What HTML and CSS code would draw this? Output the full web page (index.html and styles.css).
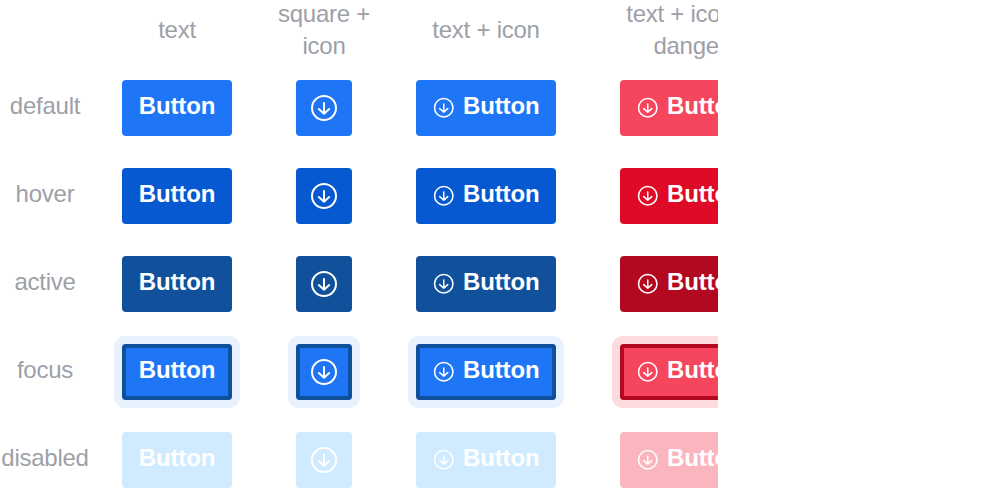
FILE: index.html
```
<!DOCTYPE html>
<html lang="en"><head><meta charset="utf-8"><title>Button states</title><link rel="stylesheet" href="styles.css"></head>
<body>
<svg width="0" height="0" class="defs"><symbol id="down" viewBox="0 0 28 28"><circle cx="14" cy="14" r="12"/><path d="M14 9v10.8M8.8 15.1l5.2 4.7 5.2-4.7"/></symbol></svg>
<main class="sheet" id="sheet">
<div class="head"></div><div class="head">text</div><div class="head">square +<br>icon</div><div class="head">text + icon</div><div class="head">text + icon +<br>danger</div>
</main>
<script src="script.js"></script>
</body></html>
```
FILE: styles.css
```
body { margin: 0; background: #fff; font-family: "Liberation Sans", Arial, sans-serif; }
.defs { display: block; }
.sheet { display: grid; grid-template-columns: 90px 174px 120px 204px 168px; grid-template-rows: 64px repeat(5, 88px); width: 718px; height: 504px; overflow: hidden; font-size: 24px; line-height: 32px; color: #9d9fa9; }
.head { display: flex; box-sizing: border-box; height: 60px; align-items: center; justify-content: center; text-align: center; white-space: nowrap; letter-spacing: -0.25px; }
.head:nth-child(2) { width: 110px; margin-left: 32px; }
.head:nth-child(3) { width: 120px; }
.head:nth-child(4) { width: 140px; margin-left: 32px; }
.head:nth-child(5) { width: 140px; margin-left: 32px; }
.label { padding-top: 26px; text-align: center; letter-spacing: -0.25px; }
.cell { padding: 16px 0 0 32px; }
.btn { display: flex; box-sizing: border-box; align-items: center; justify-content: center; width: 140px; height: 56px; padding: 0 0 4px; border: 0; border-radius: 4px; color: #fff; background: #1e75f6; font: bold 24px/32px "Liberation Sans", Arial, sans-serif; letter-spacing: -0.15px; }
.btn svg { flex: none; fill: none; stroke: #fff; stroke-width: 2; stroke-linecap: round; stroke-linejoin: round; width: 28px; height: 28px; }
.text { width: 110px; }
.square { width: 56px; padding: 0; }
.both { justify-content: flex-start; padding-left: 17px; }
.both svg { width: 21.5px; height: 21.5px; margin: 4px 8.5px 0 0; }
.hover { background: #0759d2; }
.active { background: #11519b; }
.focus { background: #1e75f6; box-shadow: inset 0 0 0 4px #11519b, 0 0 0 8px #e8f1fe; }
.disabled { background: #d0eaff; }
.danger { background: #f6465d; }
.danger.hover { background: #de0a26; }
.danger.active { background: #b30920; }
.danger.focus { background: #f6465d; box-shadow: inset 0 0 0 4px #b30920, 0 0 0 8px #fddade; }
.danger.disabled { background: #fbb5be; }
```
FILE: script.js
```
const icon = '<svg aria-hidden="true"><use href="#down"/></svg>';
document.querySelector('#sheet').insertAdjacentHTML('beforeend', ['default', 'hover', 'active', 'focus', 'disabled'].map(s => `
<div class="label">${s}</div>
<div class="cell"><button class="btn text ${s}">Button</button></div>
<div class="cell"><button class="btn square ${s}">${icon}</button></div>
<div class="cell"><button class="btn both ${s}">${icon}Button</button></div>
<div class="cell"><button class="btn both danger ${s}">${icon}Button</button></div>`).join(''));
```
